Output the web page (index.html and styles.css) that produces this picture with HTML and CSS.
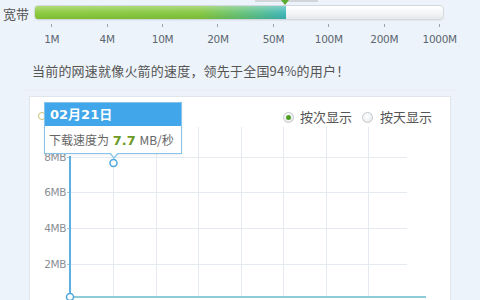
FILE: index.html
```html
<!DOCTYPE html>
<html lang="zh-CN">
<head>
<meta charset="utf-8">
<title>网速测试</title>
<link rel="stylesheet" href="styles.css">
</head>
<body>
<div class="top">
  <span class="bw-label">宽带</span>
  <div class="bar">
    <div class="bar-fill" style="width:251px"></div>
  </div>
  <div class="marker"><span class="marker-box"></span><span class="marker-tri"></span></div>
</div>
<div class="scale">
  <div class="step"><i></i><span>1M</span></div>
  <div class="step"><i></i><span>4M</span></div>
  <div class="step"><i></i><span>10M</span></div>
  <div class="step"><i></i><span>20M</span></div>
  <div class="step"><i></i><span>50M</span></div>
  <div class="step"><i></i><span>100M</span></div>
  <div class="step"><i></i><span>200M</span></div>
  <div class="step"><i></i><span>1000M</span></div>
</div>
<p class="msg">当前的网速就像火箭的速度，领先于全国94%的用户！</p>
<div class="section">
  <div class="panel">
    <div class="panel-head">
      <label class="opt"><span class="radio on"></span><span>按次显示</span></label>
      <label class="opt"><span class="radio"></span><span>按天显示</span></label>
    </div>
    <svg class="chart" width="420" height="200" viewBox="0 0 420 200">
      <g stroke="#e4eaef" stroke-width="1">
        <line x1="83.5" y1="1" x2="83.5" y2="171"/>
        <line x1="126.5" y1="1" x2="126.5" y2="171"/>
        <line x1="168.5" y1="1" x2="168.5" y2="171"/>
        <line x1="211.5" y1="1" x2="211.5" y2="171"/>
        <line x1="253.5" y1="1" x2="253.5" y2="171"/>
        <line x1="296.5" y1="1" x2="296.5" y2="171"/>
        <line x1="338.5" y1="1" x2="338.5" y2="171"/>
        <line x1="40" y1="31.5" x2="377" y2="31.5"/>
        <line x1="40" y1="66.5" x2="377" y2="66.5"/>
        <line x1="40" y1="102.5" x2="377" y2="102.5"/>
        <line x1="40" y1="138.5" x2="377" y2="138.5"/>
      </g>
      <g fill="#8a8f94" font-family="DejaVu Sans, sans-serif" font-size="10.5" text-anchor="end" letter-spacing="-0.4">
        <text x="36" y="35">8MB</text>
        <text x="36" y="70">6MB</text>
        <text x="36" y="106">4MB</text>
        <text x="36" y="142">2MB</text>
      </g>
      <g stroke="#b8c4cc" stroke-width="1">
        <line x1="37" y1="31.5" x2="40" y2="31.5"/>
        <line x1="37" y1="66.5" x2="40" y2="66.5"/>
        <line x1="37" y1="102.5" x2="40" y2="102.5"/>
        <line x1="37" y1="138.5" x2="40" y2="138.5"/>
      </g>
      <line x1="40" y1="171" x2="396" y2="171" stroke="#8ccbd8" stroke-width="2"/>
      <line x1="40" y1="30" x2="40" y2="171" stroke="#5eb0e0" stroke-width="2"/>
      <circle cx="40" cy="171" r="3.5" fill="#fff" stroke="#4fa6dc" stroke-width="1.5"/>
      <circle cx="83.5" cy="37" r="3.5" fill="#fff" stroke="#4fa6dc" stroke-width="1.5"/>
    </svg>
    <span class="legend-dot"></span>
    <div class="tip">
      <div class="tip-head">02月21日</div>
      <div class="tip-body">下载速度为 <b>7.7</b> MB/秒</div>
      <span class="tip-arrow"></span>
    </div>
  </div>
</div>
</body>
</html>
```
FILE: styles.css
```css
html, body {
  margin: 0;
  padding: 0;
}
body {
  background: #edf3fa;
  font-family: "Noto Sans CJK SC", "DejaVu Sans", sans-serif;
  color: #555;
  width: 480px;
  height: 300px;
  overflow: hidden;
}
.top {
  position: relative;
  display: flex;
  align-items: center;
  padding: 5px 0 0 3px;
  height: 15px;
}
.bw-label {
  width: 31px;
  font-size: 13px;
  line-height: 15px;
  color: #555;
  padding-top: 2px;
}
.bar {
  width: 410px;
  height: 15px;
  box-sizing: border-box;
  border: 1px solid #d3d9de;
  border-radius: 4px;
  background: linear-gradient(#ffffff, #f2f4f6 60%, #e6e9ec);
  overflow: hidden;
  box-shadow: 0 1px 1px rgba(0,0,0,0.05);
}
.bar-fill {
  height: 100%;
  background:
    linear-gradient(rgba(255,255,255,0.35), rgba(255,255,255,0.08) 50%, rgba(0,0,0,0.06)),
    linear-gradient(to right, #86c834 0%, #80c53a 66%, #5cbf78 84%, #38b4b6 100%);
}
.marker {
  position: absolute;
  left: 255px;
  top: 0;
  width: 63px;
  height: 6px;
}
.marker-box {
  position: absolute;
  left: 0;
  top: 0;
  width: 63px;
  height: 2px;
  background: #d2d6da;
}
.marker-tri {
  position: absolute;
  left: 26px;
  top: 0;
  width: 0;
  height: 0;
  border-left: 4px solid transparent;
  border-right: 4px solid transparent;
  border-top: 5px solid #5aab30;
}
.scale {
  display: grid;
  grid-template-columns: repeat(8, 55.43px);
  margin: 4px 0 0 24px;
}
.step {
  display: flex;
  flex-direction: column;
  align-items: center;
}
.step i {
  display: block;
  width: 1px;
  height: 3px;
  background: #9aa3ab;
}
.step span {
  margin-top: 6px;
  font-family: "DejaVu Sans", sans-serif;
  font-size: 10.5px;
  line-height: 13px;
  color: #5c6670;
  letter-spacing: -0.3px;
}
.msg {
  margin: 16px 0 0 32px;
  font-size: 13px;
  line-height: 18px;
  color: #555;
  letter-spacing: 0.2px;
}
.section {
  margin: 10px 24px 0 24px;
  border-top: 1px solid #e8eef4;
  padding: 5px 0 0 5px;
}
.panel {
  position: relative;
  width: 422px;
  height: 240px;
  box-sizing: border-box;
  background: #fff;
  border: 1px solid #dfe5ea;
}
.panel-head {
  display: flex;
  justify-content: flex-end;
  align-items: center;
  gap: 10px;
  height: 18px;
  padding: 11px 18px 0 0;
}
.opt {
  display: flex;
  align-items: center;
  gap: 6px;
  font-size: 13px;
  line-height: 18px;
  color: #555;
}
.opt + .opt {
  gap: 7px;
}
.radio {
  position: relative;
  width: 11px;
  height: 11px;
  box-sizing: border-box;
  border-radius: 50%;
  border: 1px solid #c3c8cc;
  background: radial-gradient(circle at 40% 35%, #ffffff, #e3e6e9);
}
.radio.on::after {
  content: "";
  position: absolute;
  left: 2px;
  top: 2px;
  width: 5px;
  height: 5px;
  border-radius: 50%;
  background: #4f9e25;
}
.chart {
  display: block;
}
.legend-dot {
  position: absolute;
  left: 8px;
  top: 15px;
  width: 8px;
  height: 8px;
  box-sizing: border-box;
  border-radius: 50%;
  border: 1.5px solid #c8c070;
}
.tip {
  position: absolute;
  left: 14px;
  top: 5px;
  width: 138px;
  box-sizing: border-box;
  border: 1px solid #86c4ec;
  background: #fff;
  box-shadow: 0 1px 2px rgba(0,0,0,0.08);
}
.tip-head {
  height: 23px;
  background: #41a6ea;
  color: #fff;
  font-family: "DejaVu Sans", "Noto Sans CJK SC", sans-serif;
  font-weight: bold;
  font-size: 13px;
  line-height: 23px;
  padding-left: 5px;
}
.tip-body {
  height: 27px;
  line-height: 27px;
  padding-left: 4px;
  font-size: 12px;
  color: #666;
  white-space: nowrap;
}
.tip-body b {
  font-family: "DejaVu Sans", sans-serif;
  color: #6d9b25;
  font-size: 13px;
  margin: 0 1px;
}
.tip-arrow {
  position: absolute;
  left: 64px;
  bottom: -6px;
  width: 0;
  height: 0;
  border-left: 5px solid transparent;
  border-right: 5px solid transparent;
  border-top: 6px solid #86c4ec;
}
.tip-arrow::after {
  content: "";
  position: absolute;
  left: -4px;
  top: -7px;
  border-left: 4px solid transparent;
  border-right: 4px solid transparent;
  border-top: 5px solid #fff;
}
```
